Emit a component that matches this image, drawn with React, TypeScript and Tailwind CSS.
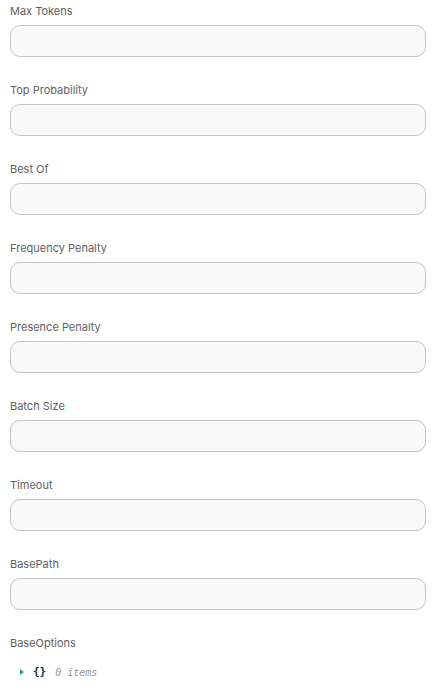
const fields = [
  'Max Tokens',
  'Top Probability',
  'Best Of',
  'Frequency Penalty',
  'Presence Penalty',
  'Batch Size',
  'Timeout',
  'BasePath',
];

const Field = ({ label }: { label: string }) => (
  <div className="pb-[25px]">
    <p className="h-4 text-[11px] leading-4 text-[#616161]">{label}</p>
    <input
      type="text"
      className="mt-[6px] block h-[32px] w-full rounded-[10px] border border-[#c4c4c4] bg-[#f9f9f9] px-3 text-sm outline-none"
    />
  </div>
);

export default function App() {
  return (
    <div
      className="min-h-[691px] bg-white px-[10px] pt-[3px] pr-[9px]"
      style={{ fontFamily: 'Inter, "Noto Sans", sans-serif' }}
    >
      {fields.map((f) => (
        <Field key={f} label={f} />
      ))}
      <p className="h-4 text-[11px] leading-4 text-[#616161]">BaseOptions</p>
      <div className="mt-[13px] flex h-4 items-center pl-[10px] text-[11px]">
        <span className="mr-[9px] inline-block h-0 w-0 border-y-[3.5px] border-l-[4px] border-y-transparent border-l-[#2aa198]" />
        <span className="font-bold text-[#073642]" style={{ fontFamily: '"DejaVu Sans Mono", monospace' }}>
          {'{}'}
        </span>
        <span
          className="ml-[9px] italic text-[#999]"
          style={{ fontFamily: '"DejaVu Sans Mono", monospace', fontSize: '10px' }}
        >
          0 items
        </span>
      </div>
    </div>
  );
}
